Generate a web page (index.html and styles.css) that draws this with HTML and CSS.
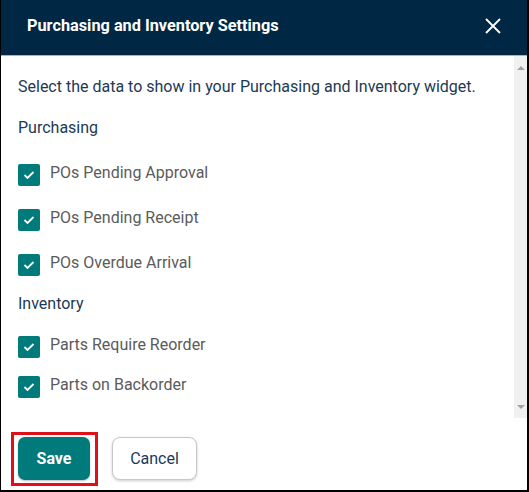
FILE: index.html
```html
<!DOCTYPE html>
<html>
<head>
<meta charset="utf-8">
<link rel="stylesheet" href="styles.css">
</head>
<body>
<div class="dialog">
  <div class="header">
    <h1 class="title">Purchasing and Inventory Settings</h1>
    <button class="close" aria-label="Close">
      <svg width="16" height="16" viewBox="0 0 16 16"><path d="M1 1 L15 15 M15 1 L1 15" stroke="#fff" stroke-width="1.8" fill="none"/></svg>
    </button>
  </div>
  <div class="body">
    <div class="scroll">
      <p class="intro">Select the data to show in your Purchasing and Inventory widget.</p>
      <p class="group">Purchasing</p>
      <div class="list list-purchasing">
        <label class="item"><span class="box"><svg width="12" height="10" viewBox="0 0 12 10"><path d="M1.5 5 L4.5 8 L10.5 2" stroke="#fff" stroke-width="1.8" fill="none"/></svg></span><span class="lbl">POs Pending Approval</span></label>
        <label class="item"><span class="box"><svg width="12" height="10" viewBox="0 0 12 10"><path d="M1.5 5 L4.5 8 L10.5 2" stroke="#fff" stroke-width="1.8" fill="none"/></svg></span><span class="lbl">POs Pending Receipt</span></label>
        <label class="item"><span class="box"><svg width="12" height="10" viewBox="0 0 12 10"><path d="M1.5 5 L4.5 8 L10.5 2" stroke="#fff" stroke-width="1.8" fill="none"/></svg></span><span class="lbl">POs Overdue Arrival</span></label>
      </div>
      <p class="group group-inv">Inventory</p>
      <div class="list list-inventory">
        <label class="item"><span class="box"><svg width="12" height="10" viewBox="0 0 12 10"><path d="M1.5 5 L4.5 8 L10.5 2" stroke="#fff" stroke-width="1.8" fill="none"/></svg></span><span class="lbl">Parts Require Reorder</span></label>
        <label class="item"><span class="box"><svg width="12" height="10" viewBox="0 0 12 10"><path d="M1.5 5 L4.5 8 L10.5 2" stroke="#fff" stroke-width="1.8" fill="none"/></svg></span><span class="lbl">Parts on Backorder</span></label>
      </div>
    </div>
    <div class="scrollbar">
      <span class="arrow up"></span>
      <span class="arrow down"></span>
    </div>
  </div>
  <div class="footer">
    <div class="save-wrap">
      <button class="btn save">Save</button>
      <span class="highlight"></span>
    </div>
    <button class="btn cancel">Cancel</button>
  </div>
</div>
</body>
</html>
```

FILE: styles.css
```css
* { box-sizing: border-box; }
html, body { margin: 0; padding: 0; }
body {
  background: #000;
  width: 529px;
  height: 492px;
  font-family: Roboto, "Liberation Sans", Arial, sans-serif;
  overflow: hidden;
}
.dialog {
  margin-left: 1px;
  width: 526px;
  height: 490px;
  background: #fff;
  display: flex;
  flex-direction: column;
  border-top-right-radius: 3px;
}
.header {
  height: 56px;
  background: #002744;
  border-bottom: 1px solid #9fb6c8;
  display: flex;
  align-items: center;
  justify-content: space-between;
  padding: 0 26px 4px 26px;
  flex: none;
}
.title {
  margin: 0;
  color: #fff;
  font-size: 16.3px;
  font-weight: 700;
  line-height: 20px;
}
.close {
  background: none;
  border: 0;
  padding: 0;
  width: 16px;
  height: 16px;
  display: flex;
  cursor: pointer;
}
.body {
  display: flex;
  height: 362px;
  flex: none;
}
.scroll {
  flex: 1;
  padding: 21px 0 0 17px;
  overflow: hidden;
}
.intro, .group {
  margin: 0;
  font-size: 16px;
  line-height: 20px;
  color: #1c3a56;
}
.group { margin-top: 21px; }
.group-inv { margin-top: 18px; }
.list {
  display: flex;
  flex-direction: column;
  gap: 23px;
  margin-top: 26px;
}
.list-inventory { gap: 18px; margin-top: 22px; }
.item {
  display: flex;
  align-items: center;
  gap: 10px;
  height: 22px;
}
.box {
  width: 22px;
  height: 22px;
  border-radius: 2px;
  background: #007a7a;
  display: flex;
  align-items: center;
  justify-content: center;
  flex: none;
}
.lbl {
  font-size: 16px;
  line-height: 20px;
  color: #5b5b5b;
  margin-top: -4px;
}
.scrollbar {
  width: 13px;
  background: #f1f1f1;
  flex: none;
  display: flex;
  flex-direction: column;
  justify-content: space-between;
  align-items: center;
  padding: 10px 0 9px;
}
.arrow {
  width: 0;
  height: 0;
  border-left: 4px solid transparent;
  border-right: 4px solid transparent;
}
.arrow.up { border-bottom: 4px solid #a3a3a3; }
.arrow.down { border-top: 4px solid #a3a3a3; }
.footer {
  flex: 1;
  display: flex;
  align-items: flex-start;
  gap: 22px;
  padding: 19px 0 0 17px;
}
.save-wrap {
  position: relative;
  display: flex;
}
.btn {
  font-family: Roboto, "Liberation Sans", Arial, sans-serif;
  font-size: 16px;
  cursor: pointer;
}
.save {
  width: 72px;
  height: 43px;
  background: #007a7a;
  color: #fff;
  font-weight: 700;
  border: 0;
  border-radius: 7px;
  box-shadow: 0 1px 2px rgba(0,0,0,0.25);
}
.highlight {
  position: absolute;
  left: -7px;
  top: -5px;
  right: -8px;
  bottom: -6px;
  border: 3px solid #e0101a;
  pointer-events: none;
}
.cancel {
  width: 85px;
  height: 43px;
  background: #fff;
  color: #1c3a56;
  border: 1px solid #c8c8c8;
  border-radius: 8px;
  box-shadow: 0 1px 3px rgba(0,0,0,0.2);
}
```
